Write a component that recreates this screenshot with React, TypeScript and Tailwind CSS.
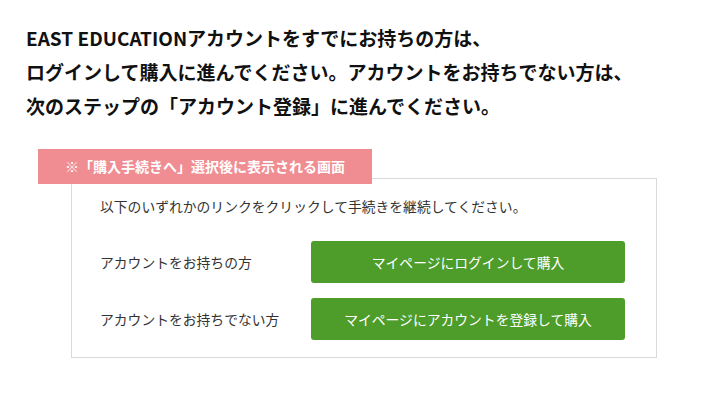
const App = () => {
  return (
    <div
      className="w-[720px] h-[400px] bg-white overflow-hidden pt-[21px]"
      style={{ fontFamily: '"Noto Sans CJK JP", "Noto Sans", sans-serif' }}
    >
      {/* heading */}
      <div className="pl-[26px] text-[19px] leading-[34px] font-bold text-[#111]">
        <p>EAST EDUCATIONアカウントをすでにお持ちの方は、</p>
        <p>ログインして購入に進んでください。アカウントをお持ちでない方は、</p>
        <p>次のステップの「アカウント登録」に進んでください。</p>
      </div>

      {/* note label */}
      <div className="mt-[26px] ml-[38px] relative z-10 w-[334px] h-[35px] bg-[#f08d93] flex items-center justify-center text-white font-bold text-[14px]">
        ※「購入手続きへ」選択後に表示される画面
      </div>

      {/* link box */}
      <div className="-mt-[6px] ml-[71px] w-[586px] border border-[#dadada] pt-[17px] pb-[17px] pl-[28px] pr-[31px] text-[#333] text-[13.8px]">
        <p className="leading-[20px]">以下のいずれかのリンクをクリックして手続きを継続してください。</p>
        <div className="mt-[25px] flex flex-col gap-[15px]">
          <div className="flex items-center">
            <span className="w-[211px]">アカウントをお持ちの方</span>
            <button className="flex-1 h-[42px] rounded-[3px] bg-[#4e9c2a] text-white">
              マイページにログインして購入
            </button>
          </div>
          <div className="flex items-center">
            <span className="w-[211px]">アカウントをお持ちでない方</span>
            <button className="flex-1 h-[42px] rounded-[3px] bg-[#4e9c2a] text-white">
              マイページにアカウントを登録して購入
            </button>
          </div>
        </div>
      </div>
    </div>
  );
};

export default App;
